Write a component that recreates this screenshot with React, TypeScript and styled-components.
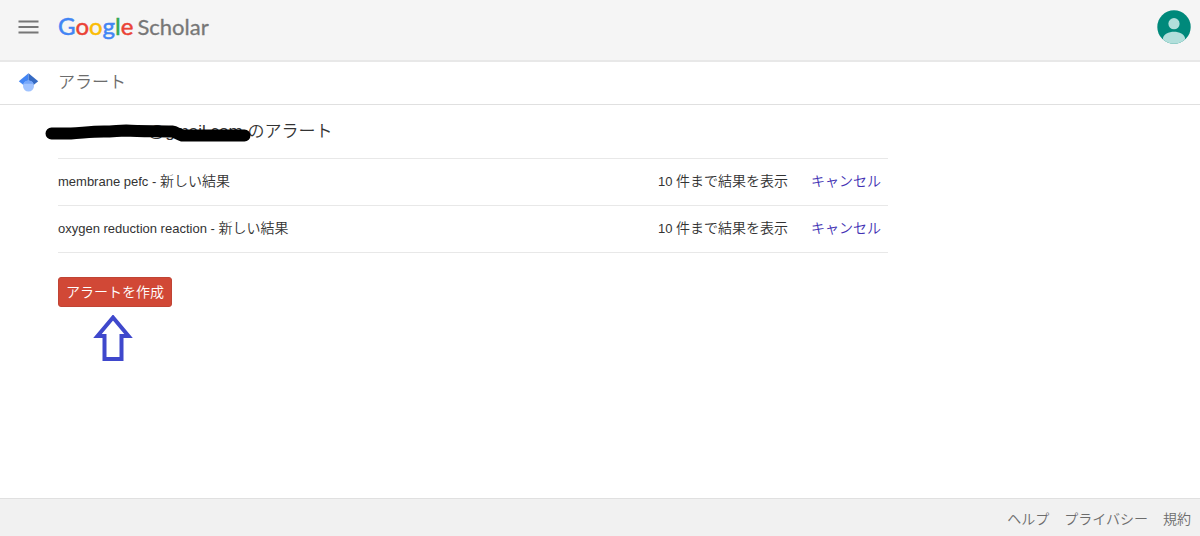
import React from "react";
import styled, { createGlobalStyle } from "styled-components";

const GlobalStyle = createGlobalStyle`
  * { box-sizing: border-box; }
  body {
    margin: 0;
    background: #fff;
    color: #333;
    font-family: "Liberation Sans", "Noto Sans CJK JP", sans-serif;
    font-size: 14px;
    font-weight: 350;
    line-height: 20px;
  }
`;

const Page = styled.div`
  display: flex;
  flex-direction: column;
  min-height: 100vh;
`;

const Header = styled.header`
  display: flex;
  align-items: center;
  height: 62px;
  padding: 0 9px 6px 18px;
  background: #f5f5f5;
  border-bottom: 2px solid #e8e8e8;
`;

const MenuButton = styled.button`
  display: flex;
  width: 40px;
  padding: 0;
  border: 0;
  background: none;
  cursor: pointer;
`;

const Logo = styled.a`
  display: flex;
  align-items: baseline;
  gap: 4px;
  padding-bottom: 2px;
  font-family: Lato, sans-serif;
  font-weight: 400;
  line-height: 32px;
  text-decoration: none;
`;

const Brand = styled.span`
  font-size: 24px;
`;

const Letter = styled.span<{ $color: string }>`
  color: ${(p) => p.$color};
  -webkit-text-stroke: 0.5px ${(p) => p.$color};
`;

const Product = styled.span`
  color: #777;
  font-size: 22px;
  -webkit-text-stroke: 0.3px #777;
`;

const AvatarButton = styled.button`
  display: flex;
  margin-left: auto;
  padding: 0;
  border: 0;
  border-radius: 50%;
  background: none;
  cursor: pointer;
`;

const SubHeader = styled.div`
  display: flex;
  align-items: center;
  height: 43px;
  padding: 0 18px;
  border-bottom: 1px solid #e0e0e0;
`;

const CapLink = styled.a`
  display: flex;
  width: 40px;
`;

const Title = styled.h1`
  margin: 0;
  color: #6c6c6c;
  font-size: 17px;
  font-weight: 350;
`;

const Main = styled.main`
  flex: 1;
  width: 100%;
  max-width: 888px;
  padding: 17px 0 32px 58px;
`;

const Account = styled.h2`
  position: relative;
  margin: 0;
  padding: 0 0 16px 90px;
  color: #333;
  font-size: 17px;
  font-weight: 350;
`;

const Redaction = styled.svg`
  position: absolute;
  left: -14px;
  top: 0;
`;

const AlertTable = styled.table`
  width: 100%;
  border-collapse: collapse;
  border-bottom: 1px solid #e8e8e8;
`;

const AlertRow = styled.tr`
  height: 47px;
  border-top: 1px solid #e8e8e8;
`;

const Cell = styled.td<{ $width?: number }>`
  width: ${(p) => (p.$width ? `${p.$width}px` : "auto")};
  padding: 0 0 2px;
  white-space: nowrap;
`;

const Latin = styled.span`
  font-size: 13px;
`;

const CancelLink = styled.a`
  color: #4232b4;
  text-decoration: none;
`;

const Create = styled.div`
  display: inline-flex;
  flex-direction: column;
  align-items: center;
  gap: 8px;
  margin-top: 24px;
`;

const CreateButton = styled.button`
  height: 30px;
  padding: 0 7px;
  border: 1px solid #c04434;
  border-radius: 3px;
  background: #d14836;
  color: #fff;
  font: inherit;
  cursor: pointer;
`;

const Footer = styled.footer`
  display: flex;
  justify-content: flex-end;
  align-items: center;
  gap: 15px;
  height: 38px;
  padding: 2px 9px 0;
  background: #f1f1f1;
  border-top: 1px solid #e0e0e0;
`;

const FooterLink = styled.a`
  color: #6c6c6c;
  text-decoration: none;
`;

const brandLetters = [
  ["G", "#4285f4"],
  ["o", "#ea4335"],
  ["o", "#fbbc05"],
  ["g", "#4285f4"],
  ["l", "#34a853"],
  ["e", "#ea4335"],
];

const alerts = ["membrane pefc", "oxygen reduction reaction"];

export default function App() {
  return (
    <Page>
      <GlobalStyle />
      <Header>
        <MenuButton type="button" aria-label="メニュー">
          <svg width="21" height="14" viewBox="0 0 21 14">
            <path d="M0.5 1.5h20M0.5 7h20M0.5 12.5h20" stroke="#777" strokeWidth="2" />
          </svg>
        </MenuButton>
        <Logo href="#home">
          <Brand>
            {brandLetters.map(([letter, color], i) => (
              <Letter key={i} $color={color}>{letter}</Letter>
            ))}
          </Brand>
          <Product>Scholar</Product>
        </Logo>
        <AvatarButton type="button" aria-label="アカウント">
          <svg width="34" height="34" viewBox="0 0 34 34">
            <clipPath id="avatar"><circle cx="17" cy="17" r="16.7" /></clipPath>
            <g clipPath="url(#avatar)">
              <rect width="34" height="34" fill="#00897b" />
              <circle cx="17" cy="13.7" r="5.6" fill="#b2dfdb" />
              <path d="M6 34v-5.500C6 24.500 12 21.800 17 21.800s11 2.700 11 6.700V34z" fill="#b2dfdb" />
            </g>
          </svg>
        </AvatarButton>
      </Header>
      <SubHeader>
        <CapLink href="#scholar" aria-label="Scholar">
          <svg width="21" height="20" viewBox="0 0 21 20">
            <path d="M10.500 .2L.8 8.200l5.500 4.500h4.200z" fill="#4285f4" />
            <path d="M10.500 .2l9.700 8-5.500 4.500h-4.200z" fill="#356ac3" />
            <circle cx="10.500" cy="13" r="5.500" fill="#a0c3ff" />
            <path d="M5.500 10.800a5.500 5.500 0 0 1 10 0z" fill="#76a7fa" />
          </svg>
        </CapLink>
        <Title>アラート</Title>
      </SubHeader>
      <Main>
        <Account>
          @gmail.com のアラート
          <Redaction width="208" height="21" viewBox="0 0 208 21" aria-hidden="true">
            <path
              d="M7.500 11.500H27C38 11 46 9.500 60 9.500C69 9.500 75 8.500 82 8.500C96 9.500 113 9 128 9.500C132 10 133 12 138 13.500H200.500"
              fill="none" stroke="#000" strokeWidth="12" strokeLinecap="round" strokeLinejoin="round"
            />
          </Redaction>
        </Account>
        <AlertTable>
          <tbody>
            {alerts.map((query) => (
              <AlertRow key={query}>
                <Cell><Latin>{query} - </Latin>新しい結果</Cell>
                <Cell $width={153}><Latin>10 </Latin>件まで結果を表示</Cell>
                <Cell $width={77}><CancelLink href="#cancel">キャンセル</CancelLink></Cell>
              </AlertRow>
            ))}
          </tbody>
        </AlertTable>
        <Create>
          <CreateButton type="button">アラートを作成</CreateButton>
          <svg width="44" height="48" viewBox="0 0 44 48">
            <path d="M20 2.500L4.500 21H11.500V44H28.500V21H35.500z" fill="#fff" stroke="#3f48cc" strokeWidth="4" />
          </svg>
        </Create>
      </Main>
      <Footer>
        <FooterLink href="#help">ヘルプ</FooterLink>
        <FooterLink href="#privacy">プライバシー</FooterLink>
        <FooterLink href="#terms">規約</FooterLink>
      </Footer>
    </Page>
  );
}
